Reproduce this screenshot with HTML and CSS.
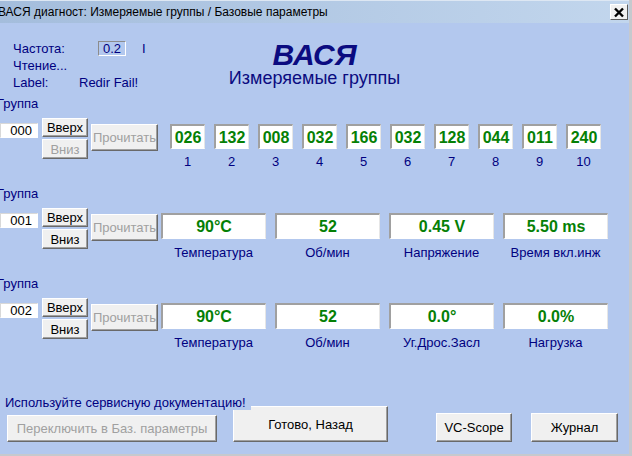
FILE: index.html
```
<!DOCTYPE html>
<html>

<head>
  <title>ВАСЯ диагност</title>
  <link rel="stylesheet" href="styles.css">
</head>

<body>
  <div class="window">
    <div class="titlebar">
      <span class="title">ВАСЯ диагност: Измеряемые группы / Базовые параметры</span>
      <button class="close">
        <svg width="12" height="11" viewBox="0 0 12 11">
          <path d="M2 1.5 L10 9.5 M10 1.5 L2 9.5" stroke="#000" stroke-width="2.4" />
        </svg>
      </button>
    </div>

    <div class="head">
      <div class="info">
        <div class="info-row"><span class="freq-label">Частота:</span><span class="freq">0.2</span><span class="tick">I</span></div>
        <div class="info-row">Чтение...</div>
        <div class="info-row"><span class="lbl-label">Label:</span><span>Redir Fail!</span></div>
      </div>
      <div class="brand">
        <div class="brand-name">ВАСЯ</div>
        <div class="brand-sub">Измеряемые группы</div>
      </div>
      <div></div>
    </div>

    <!-- group 000: raw values -->
    <section class="group">
      <p class="group-label">Группа</p>
      <div class="group-row">
        <input class="group-num" type="text" value="000" readonly>
        <div class="updown">
          <button class="btn up">Вверх</button>
          <button class="btn down" disabled>Вниз</button>
        </div>
        <button class="btn read" disabled>Прочитать</button>
        <div class="vals raw">
          <div class="cell"><span class="box">026</span><span class="cap">1</span></div>
          <div class="cell"><span class="box">132</span><span class="cap">2</span></div>
          <div class="cell"><span class="box">008</span><span class="cap">3</span></div>
          <div class="cell"><span class="box">032</span><span class="cap">4</span></div>
          <div class="cell"><span class="box">166</span><span class="cap">5</span></div>
          <div class="cell"><span class="box">032</span><span class="cap">6</span></div>
          <div class="cell"><span class="box">128</span><span class="cap">7</span></div>
          <div class="cell"><span class="box">044</span><span class="cap">8</span></div>
          <div class="cell"><span class="box">011</span><span class="cap">9</span></div>
          <div class="cell"><span class="box">240</span><span class="cap">10</span></div>
        </div>
      </div>
    </section>

    <section class="group">
      <p class="group-label">Группа</p>
      <div class="group-row">
        <input class="group-num" type="text" value="001" readonly>
        <div class="updown">
          <button class="btn up">Вверх</button>
          <button class="btn down">Вниз</button>
        </div>
        <button class="btn read" disabled>Прочитать</button>
        <div class="vals">
          <div class="cell"><span class="box">90°C</span><span class="cap">Температура</span></div>
          <div class="cell"><span class="box">52</span><span class="cap">Об/мин</span></div>
          <div class="cell"><span class="box">0.45 V</span><span class="cap">Напряжение</span></div>
          <div class="cell"><span class="box">5.50 ms</span><span class="cap">Время вкл.инж</span></div>
        </div>
      </div>
    </section>

    <section class="group">
      <p class="group-label">Группа</p>
      <div class="group-row">
        <input class="group-num" type="text" value="002" readonly>
        <div class="updown">
          <button class="btn up">Вверх</button>
          <button class="btn down">Вниз</button>
        </div>
        <button class="btn read" disabled>Прочитать</button>
        <div class="vals">
          <div class="cell"><span class="box">90°C</span><span class="cap">Температура</span></div>
          <div class="cell"><span class="box">52</span><span class="cap">Об/мин</span></div>
          <div class="cell"><span class="box">0.0°</span><span class="cap">Уг.Дрос.Засл</span></div>
          <div class="cell"><span class="box">0.0%</span><span class="cap">Нагрузка</span></div>
        </div>
      </div>
    </section>

    <div class="footer">
      <p class="note">Используйте сервисную документацию!</p>
      <div class="actions">
        <button class="btn switch" disabled>Переключить в Баз. параметры</button>
        <button class="btn done">Готово, Назад</button>
        <button class="btn scope">VC-Scope</button>
        <button class="btn log">Журнал</button>
      </div>
    </div>
  </div>
</body>

</html>
```

FILE: styles.css
```
* {
  box-sizing: border-box;
}

html,
body {
  margin: 0;
  padding: 0;
}

body {
  font: 13px/15px "Liberation Sans", Arial, sans-serif;
  color: #000080;
  width: 632px;
  height: 456px;
  overflow: hidden;
}

p {
  margin: 0;
}

.window {
  width: 632px;
  height: 456px;
  background-color: #b3c8ee;
  border-right: 3px solid #c6c9ce;
  border-bottom: 2px solid #c6c9ce;
  display: flex;
  flex-direction: column;
  overflow: hidden;
}

/* TITLE */
.titlebar {
  height: 23px;
  flex-shrink: 0;
  display: flex;
  align-items: center;
  justify-content: space-between;
  background: linear-gradient(to right, #a4bddc, #c2d6ed);
  border-top: 1px solid #dde7f3;
}

.title {
  color: #000;
  font-size: 12px;
  margin-left: -2px;
  white-space: nowrap;
}

.close {
  width: 18px;
  height: 16px;
  margin-right: 1px;
  padding: 0;
  display: flex;
  align-items: center;
  justify-content: center;
  background: #f0f0f0;
  border: 1px solid;
  border-color: #fff #5a5a5a #5a5a5a #fff;
}

/* HEADER */
.head {
  display: grid;
  grid-template-columns: 1fr auto 1fr;
  padding-top: 17px;
  height: 73px;
  flex-shrink: 0;
}

.info {
  padding: 0 0 0 13px;
  line-height: 17px;
}

.info-row {
  display: flex;
  align-items: center;
  height: 17px;
  white-space: nowrap;
}

.freq-label {
  width: 85px;
}

.freq {
  width: 28px;
  height: 15px;
  line-height: 13px;
  text-align: center;
  border: 1px solid;
  border-color: #8c8c8c #fff #fff #8c8c8c;
}

.tick {
  margin-left: 16px;
}

.lbl-label {
  width: 66px;
}

.brand {
  text-align: center;
  color: #0b0b80;
}

.brand-name {
  font-size: 30px;
  line-height: 29px;
  font-weight: bold;
  font-style: italic;
}

.brand-sub {
  font-size: 18px;
  line-height: 19px;
}

/* GROUPS */
.group {
  height: 90px;
  flex-shrink: 0;
}

.group-label {
  margin-left: -3px;
  height: 15px;
}

.group-row {
  display: flex;
  align-items: flex-start;
  margin-top: 7px;
}

.group-num {
  width: 38px;
  height: 15px;
  margin-top: 5px;
  padding: 0 5px 0 0;
  font: 13px/13px "Liberation Sans", Arial, sans-serif;
  color: #000;
  text-align: right;
  background: #fff;
  border: 1px solid;
  border-color: #d8d8d8 #fff #fff #d8d8d8;
  outline: none;
}

.btn {
  background: #f0f0f0;
  border: 1px solid;
  border-color: #fff #696969 #696969 #fff;
  box-shadow: inset -1px -1px #a0a0a0;
  font: 13px/15px "Liberation Sans", Arial, sans-serif;
  color: #000;
  padding: 0;
}

.btn:disabled {
  color: #a0a0a0;
}

.updown {
  display: flex;
  flex-direction: column;
  gap: 2px;
  margin-left: 4px;
}

.up {
  width: 46px;
  height: 19px;
}

.down {
  width: 46px;
  height: 20px;
}

.read {
  width: 67px;
  height: 27px;
  margin: 6px 0 0 3px;
}

.vals {
  display: flex;
  gap: 9px;
  margin: 5px 0 0 3px;
}

.vals.raw {
  margin: 6px 0 0 12px;
}

.cell {
  display: flex;
  flex-direction: column;
  align-items: center;
}

.box {
  width: 105px;
  height: 26px;
  display: flex;
  align-items: center;
  justify-content: center;
  background: #fff;
  border-top: 2px solid #a0a0a0;
  border-left: 2px solid #a0a0a0;
  border-right: 1px solid #e6e6e6;
  border-bottom: 1px solid #fff;
  color: #058005;
  font-weight: bold;
  font-size: 16px;
}

.raw .box {
  width: 35px;
  height: 25px;
}

.cap {
  margin-top: 6px;
  white-space: nowrap;
}

.raw .cap {
  margin-top: 5px;
}

/* FOOTER */
.footer {
  margin-top: 29px;
}

.note {
  display: inline-block;
  position: relative;
  z-index: 1;
  padding: 0 5px;
  background: #b3c8ee;
}

.actions {
  display: flex;
  align-items: flex-end;
  margin-top: -4px;
  height: 36px;
}

.switch {
  width: 210px;
  height: 27px;
  margin-left: 7px;
}

.done {
  width: 155px;
  height: 36px;
  margin-left: 16px;
}

.scope {
  width: 76px;
  height: 29px;
  margin-left: 48px;
}

.log {
  width: 87px;
  height: 29px;
  margin-left: 19px;
}
```
